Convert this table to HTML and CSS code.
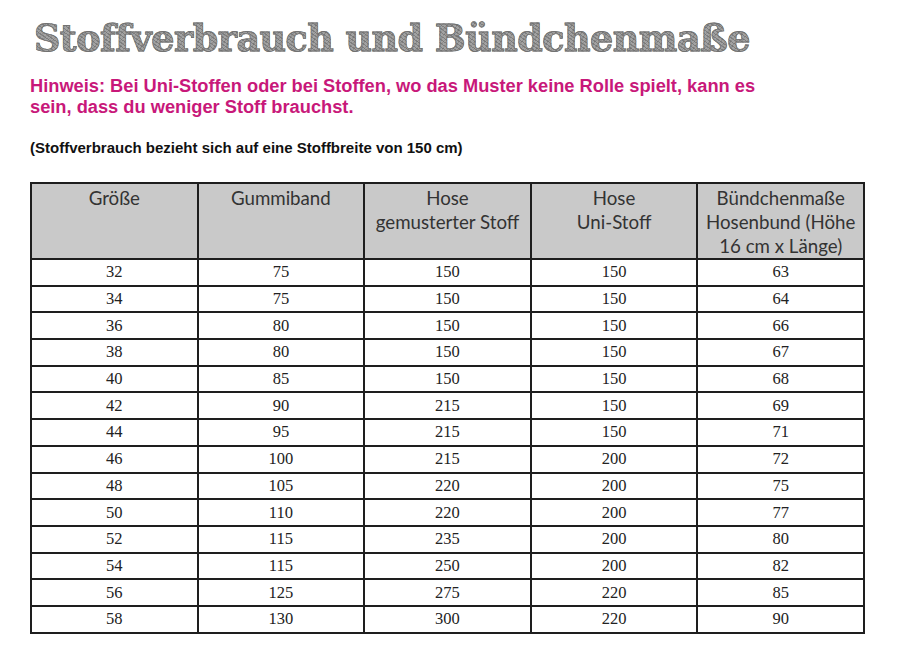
FILE: index.html
```html
<!DOCTYPE html>
<html lang="de">
<head>
<meta charset="utf-8">
<title>Stoffverbrauch und Bündchenmaße</title>
<link rel="stylesheet" href="styles.css">
</head>
<body>
<div class="page">
  <h1 class="title">Stoffverbrauch und Bündchenmaße</h1>
  <p class="hint">Hinweis: Bei Uni-Stoffen oder bei Stoffen, wo das Muster keine Rolle spielt, kann es sein, dass du weniger Stoff brauchst.</p>
  <p class="note">(Stoffverbrauch bezieht sich auf eine Stoffbreite von 150 cm)</p>
  <table class="sizes">
    <thead>
      <tr>
        <th>Größe</th>
        <th>Gummiband</th>
        <th>Hose<br>gemusterter Stoff</th>
        <th>Hose<br>Uni-Stoff</th>
        <th>Bündchenmaße<br>Hosenbund (Höhe<br>16 cm x Länge)</th>
      </tr>
    </thead>
    <tbody>
      <tr><td>32</td><td>75</td><td>150</td><td>150</td><td>63</td></tr>
      <tr><td>34</td><td>75</td><td>150</td><td>150</td><td>64</td></tr>
      <tr><td>36</td><td>80</td><td>150</td><td>150</td><td>66</td></tr>
      <tr><td>38</td><td>80</td><td>150</td><td>150</td><td>67</td></tr>
      <tr><td>40</td><td>85</td><td>150</td><td>150</td><td>68</td></tr>
      <tr><td>42</td><td>90</td><td>215</td><td>150</td><td>69</td></tr>
      <tr><td>44</td><td>95</td><td>215</td><td>150</td><td>71</td></tr>
      <tr><td>46</td><td>100</td><td>215</td><td>200</td><td>72</td></tr>
      <tr><td>48</td><td>105</td><td>220</td><td>200</td><td>75</td></tr>
      <tr><td>50</td><td>110</td><td>220</td><td>200</td><td>77</td></tr>
      <tr><td>52</td><td>115</td><td>235</td><td>200</td><td>80</td></tr>
      <tr><td>54</td><td>115</td><td>250</td><td>200</td><td>82</td></tr>
      <tr><td>56</td><td>125</td><td>275</td><td>220</td><td>85</td></tr>
      <tr><td>58</td><td>130</td><td>300</td><td>220</td><td>90</td></tr>
    </tbody>
  </table>
</div>
</body>
</html>
```
FILE: styles.css
```css
html, body {
  margin: 0;
  padding: 0;
  background: #ffffff;
}
.page {
  padding: 15px 0 0 30px;
  width: 835px;
}
.title {
  margin: 0 0 0 4px;
  font-family: "DejaVu Serif", serif;
  font-weight: bold;
  font-size: 36.5px;
  line-height: 48px;
  letter-spacing: -0.5px;
  color: transparent;
  background-image:
    repeating-linear-gradient(35deg, rgba(90,90,90,0.5) 0 1px, rgba(0,0,0,0) 1px 3px),
    repeating-linear-gradient(-50deg, rgba(120,120,120,0.4) 0 1px, rgba(0,0,0,0) 1px 4px),
    linear-gradient(#a2a2a2, #a2a2a2);
  -webkit-background-clip: text;
  background-clip: text;
  -webkit-text-stroke: 0.8px #727272;
  display: inline-block;
}
.hint {
  margin: 12px 0 0 0;
  font-family: "Liberation Sans", Arial, sans-serif;
  font-weight: bold;
  font-size: 18.25px;
  line-height: 21px;
  color: #c8187a;
  width: 765px;
}
.note {
  margin: 22px 0 0 0;
  font-family: "Liberation Sans", Arial, sans-serif;
  font-weight: bold;
  font-size: 15px;
  line-height: 18px;
  color: #111;
}
.sizes {
  margin-top: 25px;
  width: 835px;
  border-collapse: collapse;
  table-layout: fixed;
}
.sizes th, .sizes td {
  border: 2px solid #1e1e1e;
  text-align: center;
  width: 20%;
}
.sizes th {
  background: #c9c9c9;
  font-family: Lato, "Open Sans", sans-serif;
  font-weight: normal;
  font-size: 18.7px;
  line-height: 24px;
  color: #333;
  vertical-align: top;
  padding: 2px 2px 0 2px;
  height: 72px;
  box-sizing: border-box;
}
.sizes td {
  font-family: "Liberation Serif", serif;
  font-size: 16.5px;
  color: #222;
  height: 24.7px;
  padding: 0;
  line-height: 24px;
}
```
